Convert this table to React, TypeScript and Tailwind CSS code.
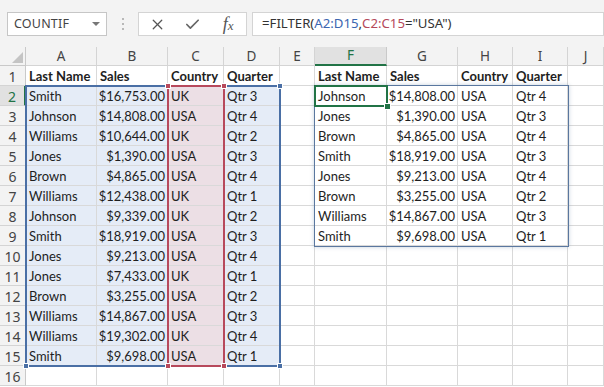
import { Check, X } from "lucide-react";

const cols = ["A", "B", "C", "D", "E", "F", "G", "H", "I", "J"];

const left = [
  ["Smith", "$16,753.00", "UK", "Qtr 3"],
  ["Johnson", "$14,808.00", "USA", "Qtr 4"],
  ["Williams", "$10,644.00", "UK", "Qtr 2"],
  ["Jones", "$1,390.00", "USA", "Qtr 3"],
  ["Brown", "$4,865.00", "USA", "Qtr 4"],
  ["Williams", "$12,438.00", "UK", "Qtr 1"],
  ["Johnson", "$9,339.00", "UK", "Qtr 2"],
  ["Smith", "$18,919.00", "USA", "Qtr 3"],
  ["Jones", "$9,213.00", "USA", "Qtr 4"],
  ["Jones", "$7,433.00", "UK", "Qtr 1"],
  ["Brown", "$3,255.00", "USA", "Qtr 2"],
  ["Williams", "$14,867.00", "USA", "Qtr 3"],
  ["Williams", "$19,302.00", "UK", "Qtr 4"],
  ["Smith", "$9,698.00", "USA", "Qtr 1"],
];

const right = [
  ["Johnson", "$14,808.00", "USA", "Qtr 4"],
  ["Jones", "$1,390.00", "USA", "Qtr 3"],
  ["Brown", "$4,865.00", "USA", "Qtr 4"],
  ["Smith", "$18,919.00", "USA", "Qtr 3"],
  ["Jones", "$9,213.00", "USA", "Qtr 4"],
  ["Brown", "$3,255.00", "USA", "Qtr 2"],
  ["Williams", "$14,867.00", "USA", "Qtr 3"],
  ["Smith", "$9,698.00", "USA", "Qtr 1"],
];

const header = ["Last Name", "Sales", "Country", "Quarter"];

// value of a cell, row is 1-based, col is 0-based (A = 0)
function cellValue(row: number, col: number): string {
  if (row === 1) {
    if (col <= 3) return header[col];
    if (col >= 5 && col <= 8) return header[col - 5];
    return "";
  }
  if (col <= 3 && row <= 15) return left[row - 2][col];
  if (col >= 5 && col <= 8 && row <= 9) return right[row - 2][col - 5];
  return "";
}

function cellBg(row: number, col: number) {
  if (row >= 2 && row <= 15) {
    if (col === 2) return "bg-[#ecdfe5]";
    if (col <= 3) return "bg-[#e5ecf7]";
  }
  return "bg-white";
}

function Handle({ x, y, color }: { x: number; y: number; color: string }) {
  return (
    <div
      className={`absolute w-[6px] h-[6px] border border-white ${color}`}
      style={{ left: x - 3, top: y - 3 }}
    />
  );
}

export default function App() {
  const rows = Array.from({ length: 16 }, (_, i) => i + 1);

  return (
    <div className="w-[604px] h-[387px] overflow-hidden bg-white font-['Lato',sans-serif]">
      {/* Formula bar */}
      <div className="h-[47px] bg-[#f3f3f3] flex items-start pt-[12px] pl-[7px] font-['Noto_Sans',sans-serif]">
        <div className="w-[100px] h-[24px] bg-white border border-[#c6c6c6] flex items-center pl-[6px] pr-[6px]">
          <span className="text-[12.5px] text-[#444] flex-1 tracking-[0.2px]">COUNTIF</span>
          <span className="w-0 h-0 border-l-[4px] border-r-[4px] border-t-[4px] border-l-transparent border-r-transparent border-t-[#777]" />
        </div>
        <div className="w-[31px] h-[24px] flex flex-col items-center justify-center gap-[3px]">
          <span className="w-[2px] h-[2px] bg-[#b8b8b8]" />
          <span className="w-[2px] h-[2px] bg-[#b8b8b8]" />
          <span className="w-[2px] h-[2px] bg-[#b8b8b8]" />
        </div>
        <div className="w-[109px] h-[24px] bg-white border border-[#d4d4d4] flex items-center text-[#555]">
          <div className="w-[36px] flex justify-center pl-[2px]">
            <X size={17} strokeWidth={1.8} />
          </div>
          <div className="w-[36px] flex justify-center">
            <Check size={17} strokeWidth={2.4} color="#666" />
          </div>
          <div className="w-[36px] flex justify-center items-baseline font-['Liberation_Serif',serif] italic text-[18px] text-[#555] leading-none">
            f<span className="text-[13px]">x</span>
          </div>
        </div>
        <div className="ml-[5px] flex-1 h-[24px] bg-white border border-[#d4d4d4] flex items-center pl-[9px] text-[13.2px] text-[#333]">
          <span>=FILTER(</span>
          <span className="text-[#3c66b0]">A2:D15</span>
          <span>,</span>
          <span className="text-[#b5485a]">C2:C15</span>
          <span>="USA")</span>
        </div>
      </div>

      {/* Sheet grid */}
      <div className="relative">
        <div className="grid grid-cols-[26px_71px_71px_56px_56px_35px_72px_71px_55px_55px_36px] grid-rows-[19px_repeat(16,20px)]">
          <div className="bg-[#f3f3f3] border-r border-b border-[#c9c9c9] flex items-end justify-end p-[2px]">
            <div className="w-0 h-0 border-l-[11px] border-t-[11px] border-l-transparent border-t-transparent border-b-0 border-r-0 [border-bottom:11px_solid_#c4c4c4]" />
          </div>
          {cols.map((c) => (
            <div
              key={c}
              className={`flex items-center justify-center text-[13.5px] font-['Noto_Sans',sans-serif] ${
                c === "F"
                  ? "bg-[#e1e1e1] text-[#217346] border-b-2 border-b-[#217346] border-r border-r-[#c9c9c9]"
                  : "bg-[#f3f3f3] text-[#444] border-r border-b border-[#d4d4d4]"
              }`}
            >
              {c}
            </div>
          ))}
          {rows.map((r) => (
            <>
              <div
                key={`h${r}`}
                className={`flex items-center justify-center pt-[2px] text-[14px] font-['Noto_Sans',sans-serif] border-b border-[#d4d4d4] ${
                  r === 2
                    ? "bg-[#e1e1e1] text-[#217346] border-r-2 border-r-[#217346]"
                    : "bg-[#f3f3f3] text-[#444] border-r border-r-[#c9c9c9]"
                }`}
              >
                {r}
              </div>
              {cols.map((c, ci) => {
                const v = cellValue(r, ci);
                const isMoney = v.startsWith("$");
                return (
                  <div
                    key={`${c}${r}`}
                    className={`border-r border-b border-[#d9d9d9] flex items-center pt-[2px] overflow-visible whitespace-nowrap text-[13px] text-[#1e1e1e] ${cellBg(r, ci)} ${
                      isMoney ? "justify-end pr-[2px]" : "pl-[3px]"
                    } ${r === 1 ? "font-bold" : ""}`}
                  >
                    {v}
                  </div>
                );
              })}
            </>
          ))}
        </div>

        {/* range A2:D15 */}
        <div className="absolute left-[25px] top-[38px] w-[256px] h-[282px] border-2 border-[#4a6fa5] pointer-events-none" />
        {/* range C2:C15 */}
        <div className="absolute left-[167px] top-[38px] w-[58px] h-[282px] border-2 border-[#b7495c] pointer-events-none" />
        <Handle x={280} y={39} color="bg-[#4a6fa5]" />
        <Handle x={280} y={319} color="bg-[#4a6fa5]" />
        <Handle x={26} y={319} color="bg-[#4a6fa5]" />
        <Handle x={168} y={39} color="bg-[#b7495c]" />
        <Handle x={224} y={39} color="bg-[#b7495c]" />
        <Handle x={168} y={319} color="bg-[#b7495c]" />
        <Handle x={224} y={319} color="bg-[#b7495c]" />

        {/* spill range F2:I9 */}
        <div className="absolute left-[314px] top-[38px] w-[255px] h-[162px] border border-[#5a779f] shadow-[0_0_4px_rgba(90,119,159,0.35)] pointer-events-none" />
        {/* active cell F2 */}
        <div className="absolute left-[314px] top-[38px] w-[74px] h-[22px] border-2 border-[#217346] pointer-events-none" />
        <div className="absolute left-[384px] top-[56px] w-[7px] h-[7px] bg-[#217346] border border-white" />
      </div>
    </div>
  );
}
